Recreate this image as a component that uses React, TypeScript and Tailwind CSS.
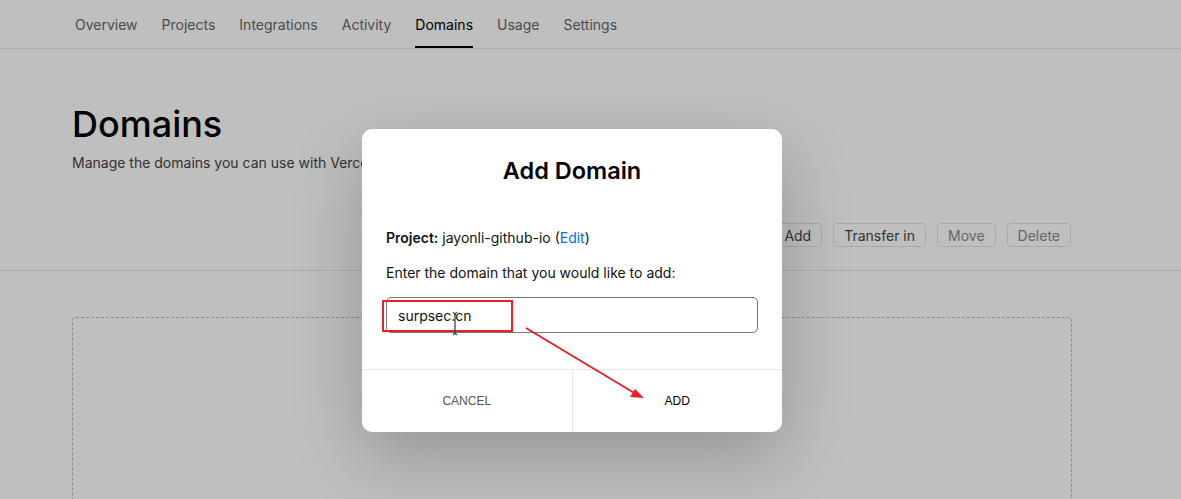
import React from 'react';

const tabs = ['Overview', 'Projects', 'Integrations', 'Activity', 'Domains', 'Usage', 'Settings'];

function TopNav() {
  return (
    <div className="h-[49px] border-b border-gray-200">
      <div className="ml-[75px] flex h-full items-stretch gap-6">
        {tabs.map(tab => (
          <div
            key={tab}
            className={`flex items-center border-b-2 px-0 pt-[3px] text-[14px] ${
              tab === 'Domains' ? 'border-black text-black' : 'border-transparent text-[#666]'
            }`}
          >
            {tab}
          </div>
        ))}
      </div>
    </div>
  );
}

function ActionButton({ label, disabled }: { label: string; disabled?: boolean }) {
  return (
    <button
      type="button"
      className={`h-[24px] rounded-[4px] border border-[#e2e2e2] px-[10px] text-[14px] ${
        disabled ? 'text-[#888]' : 'text-[#444]'
      }`}
    >
      {label}
    </button>
  );
}

function DomainsPage() {
  return (
    <div className="min-h-[499px] bg-white">
      <TopNav />
      <div className="ml-[72px] w-[999px]">
        <h1 className="mt-[51px] text-[36px] font-medium leading-[48px] text-black">Domains</h1>
        <p className="mt-[4px] text-[14px] text-[#444]">
          Manage the domains you can use with Vercel and its Projects.
        </p>
        <div className="mt-[50px] flex justify-end gap-[11px]">
          <ActionButton label="Add" />
          <ActionButton label="Transfer in" />
          <ActionButton label="Move" disabled />
          <ActionButton label="Delete" disabled />
        </div>
      </div>
      <div className="mt-[23px] border-t border-gray-200" />
      <div className="ml-[72px] mt-[46px] h-[200px] w-[1000px] rounded-[4px] border border-dashed border-[#bbb]" />
    </div>
  );
}

function AddDomainModal() {
  return (
    <div className="absolute left-[362px] top-[129px] w-[420px] overflow-hidden rounded-[10px] bg-white shadow-[0_25px_70px_rgba(0,0,0,0.22)]">
      <h2 className="pt-[26px] text-center text-[23.5px] font-semibold leading-[32px] text-black">Add Domain</h2>
      <div className="px-6 pt-[41px]">
        <p className="text-[14px] leading-[20px] text-[#111]">
          <span className="font-semibold">Project:</span> jayonli-github-io (
          <span className="text-[#0070f3]">Edit</span>)
        </p>
        <p className="mt-[15px] text-[14px] leading-[20px] text-[#111]">
          Enter the domain that you would like to add:
        </p>
        <div className="mt-[14px] flex h-[36px] items-center rounded-[5px] border border-[#777] px-[11px] text-[14px] text-[#111]">
          surpsec.cn
        </div>
      </div>
      <div className="mt-[36px] flex h-[63px] border-t border-[#e8e8e8] font-['Liberation_Sans',Arial,sans-serif] text-[12px]">
        <button type="button" className="flex-1 text-[#555]">CANCEL</button>
        <button type="button" className="flex-1 border-l border-[#e8e8e8] text-black">ADD</button>
      </div>
    </div>
  );
}

function Annotations() {
  return (
    <>
      <div className="absolute left-[382px] top-[300px] h-[32px] w-[131px] border-2 border-[#e8202a]" />
      <svg className="pointer-events-none absolute left-0 top-0" width="1181" height="499">
        <line x1="526" y1="328" x2="636" y2="394" stroke="#e8202a" strokeWidth="2" />
        <polygon points="644,398 630,397 635,389" fill="#e8202a" />
        {/* text cursor */}
        <path d="M453 312 q2 1 2 4 v15 q0 3 -2 4 M457 312 q-2 1 -2 4 v15 q0 3 2 4" stroke="#2f4f3a" strokeWidth="1.3" fill="none" />
      </svg>
    </>
  );
}

export default function App() {
  return (
    <div className="relative h-[499px] w-[1181px] overflow-hidden font-['Inter','Noto_Sans',sans-serif]">
      <DomainsPage />
      <div className="absolute inset-0 bg-black/25" />
      <AddDomainModal />
      <Annotations />
    </div>
  );
}
